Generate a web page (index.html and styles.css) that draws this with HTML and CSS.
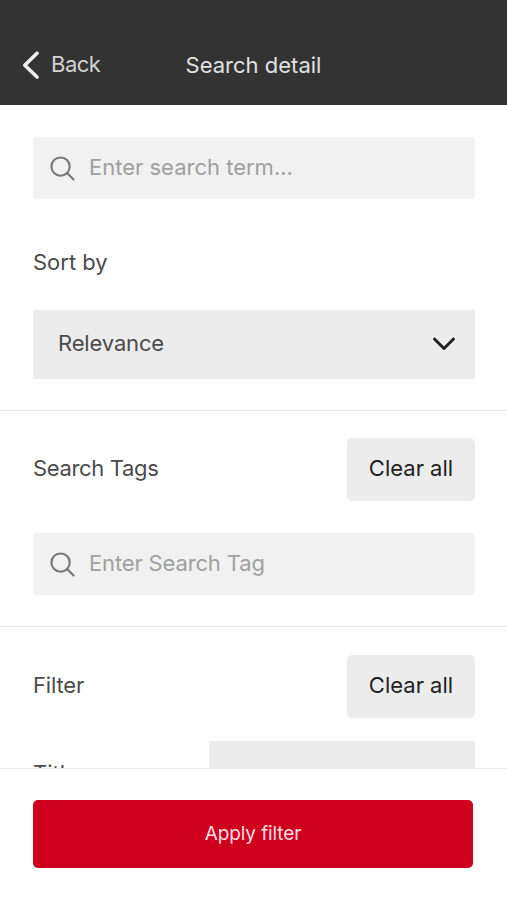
FILE: index.html
```html
<!DOCTYPE html>
<html lang="en">
<head>
<meta charset="utf-8">
<title>Search detail</title>
<link rel="stylesheet" href="styles.css">
</head>
<body>
<header class="topbar">
  <a class="back">
    <svg class="back-icon" viewBox="0 0 18 28" aria-hidden="true"><path d="M15 2.200 2.800 14.200l12.200 11.800"/></svg>
    <span class="back-label">Back</span>
  </a>
  <h1 class="title">Search detail</h1>
</header>
<main class="content">
  <section class="section section-search">
    <div class="search">
      <svg class="search-icon" viewBox="0 0 26 26" aria-hidden="true"><circle cx="11" cy="11" r="9.500"/><path d="m17.800 17.800 6.700 6.700"/></svg>
      <span class="placeholder term">Enter search term...</span>
    </div>
    <h2 class="label sort">Sort by</h2>
    <div class="select">
      <span class="value">Relevance</span>
      <svg class="chevron" viewBox="0 0 24 16" aria-hidden="true"><path d="m2.500 3 9.500 9.500L21.500 3"/></svg>
    </div>
  </section>
  <section class="section section-tags">
    <div class="row">
      <h2 class="label tags">Search Tags</h2>
      <button class="clear">Clear all</button>
    </div>
    <div class="search">
      <svg class="search-icon" viewBox="0 0 26 26" aria-hidden="true"><circle cx="11" cy="11" r="9.500"/><path d="m17.800 17.800 6.700 6.700"/></svg>
      <span class="placeholder tag">Enter Search Tag</span>
    </div>
  </section>
  <section class="section section-filter">
    <div class="row">
      <h2 class="label filter">Filter</h2>
      <button class="clear">Clear all</button>
    </div>
    <div class="field">
      <span class="label">Title</span>
      <div class="field-select"></div>
    </div>
  </section>
</main>
<footer class="footer">
  <button class="apply">Apply filter</button>
</footer>
</body>
</html>
```
FILE: styles.css
```css
* { box-sizing: border-box; }
body {
  margin: 0;
  height: 900px;
  overflow: hidden;
  display: flex;
  flex-direction: column;
  background: #fefefe;
  color: #4b4b4b;
  font: 400 22px/28px Inter, "Liberation Sans", sans-serif;
}
h1, h2 { margin: 0; font-size: inherit; font-weight: 400; }
button { border: 0; padding: 0; font: inherit; }
svg { fill: none; stroke-linecap: round; stroke-linejoin: round; flex: none; }

.topbar {
  height: 105px;
  flex: none;
  padding: 24px 22px 0;
  display: grid;
  grid-template-columns: 1fr auto 1fr;
  align-items: center;
  background: #333;
  color: #d4d4d4;
}
.back { display: flex; align-items: center; gap: 11px; }
.back-icon { width: 18px; height: 28px; stroke: #eee; stroke-width: 3.600; }
.back-label { letter-spacing: -0.5px; padding-bottom: 2px; }
.title { color: #e0e0e0; }

.content { height: 663px; flex: none; overflow: hidden; }
.section { padding: 0 32px 0 33px; }
.section-search { padding-top: 32px; height: 306px; border-bottom: 1px solid #e9e9e9; }
.section-tags { padding-top: 27px; height: 216px; border-bottom: 1px solid #e9e9e9; }
.section-filter { padding-top: 28px; }

.search {
  height: 62px;
  padding-left: 17px;
  display: flex;
  align-items: center;
  gap: 14px;
  border-radius: 4px;
  background: #f1f1f1;
  color: #a0a0a0;
}
.search-icon { width: 25px; height: 25px; stroke: #777; stroke-width: 2.200; }
.placeholder { padding-bottom: 2px; }
.tag { letter-spacing: -0.15px; }
.sort { margin: 49px 0 34px; }
.select {
  height: 69px;
  padding: 0 19px 2px 25px;
  display: flex;
  align-items: center;
  justify-content: space-between;
  background: #ececec;
}
.value { letter-spacing: -0.15px; padding-bottom: 2px; }
.chevron { width: 24px; height: 16px; stroke: #222; stroke-width: 3; }
.row { display: flex; align-items: center; justify-content: space-between; margin-bottom: 32px; }
.tags { letter-spacing: -0.35px; padding-bottom: 3px; }
.filter { letter-spacing: -0.15px; padding-bottom: 3px; }
.clear {
  width: 128px;
  height: 63px;
  padding-bottom: 4px;
  border-radius: 5px;
  background: #ececec;
  color: #222;
}
.section-filter .row { margin-bottom: 23px; }
.field { display: flex; justify-content: space-between; }
.field .label { padding-top: 18px; }
.field-select { width: 266px; height: 69px; background: #ececec; }

.footer {
  flex: 1;
  padding: 31px 34px 0 33px;
  border-top: 1px solid #e9e9e9;
}
.apply {
  width: 100%;
  height: 68px;
  padding-bottom: 1px;
  border-radius: 5px;
  background: #cf001e;
  color: #fbdde1;
  font-size: 19px;
  letter-spacing: -0.1px;
}
```
